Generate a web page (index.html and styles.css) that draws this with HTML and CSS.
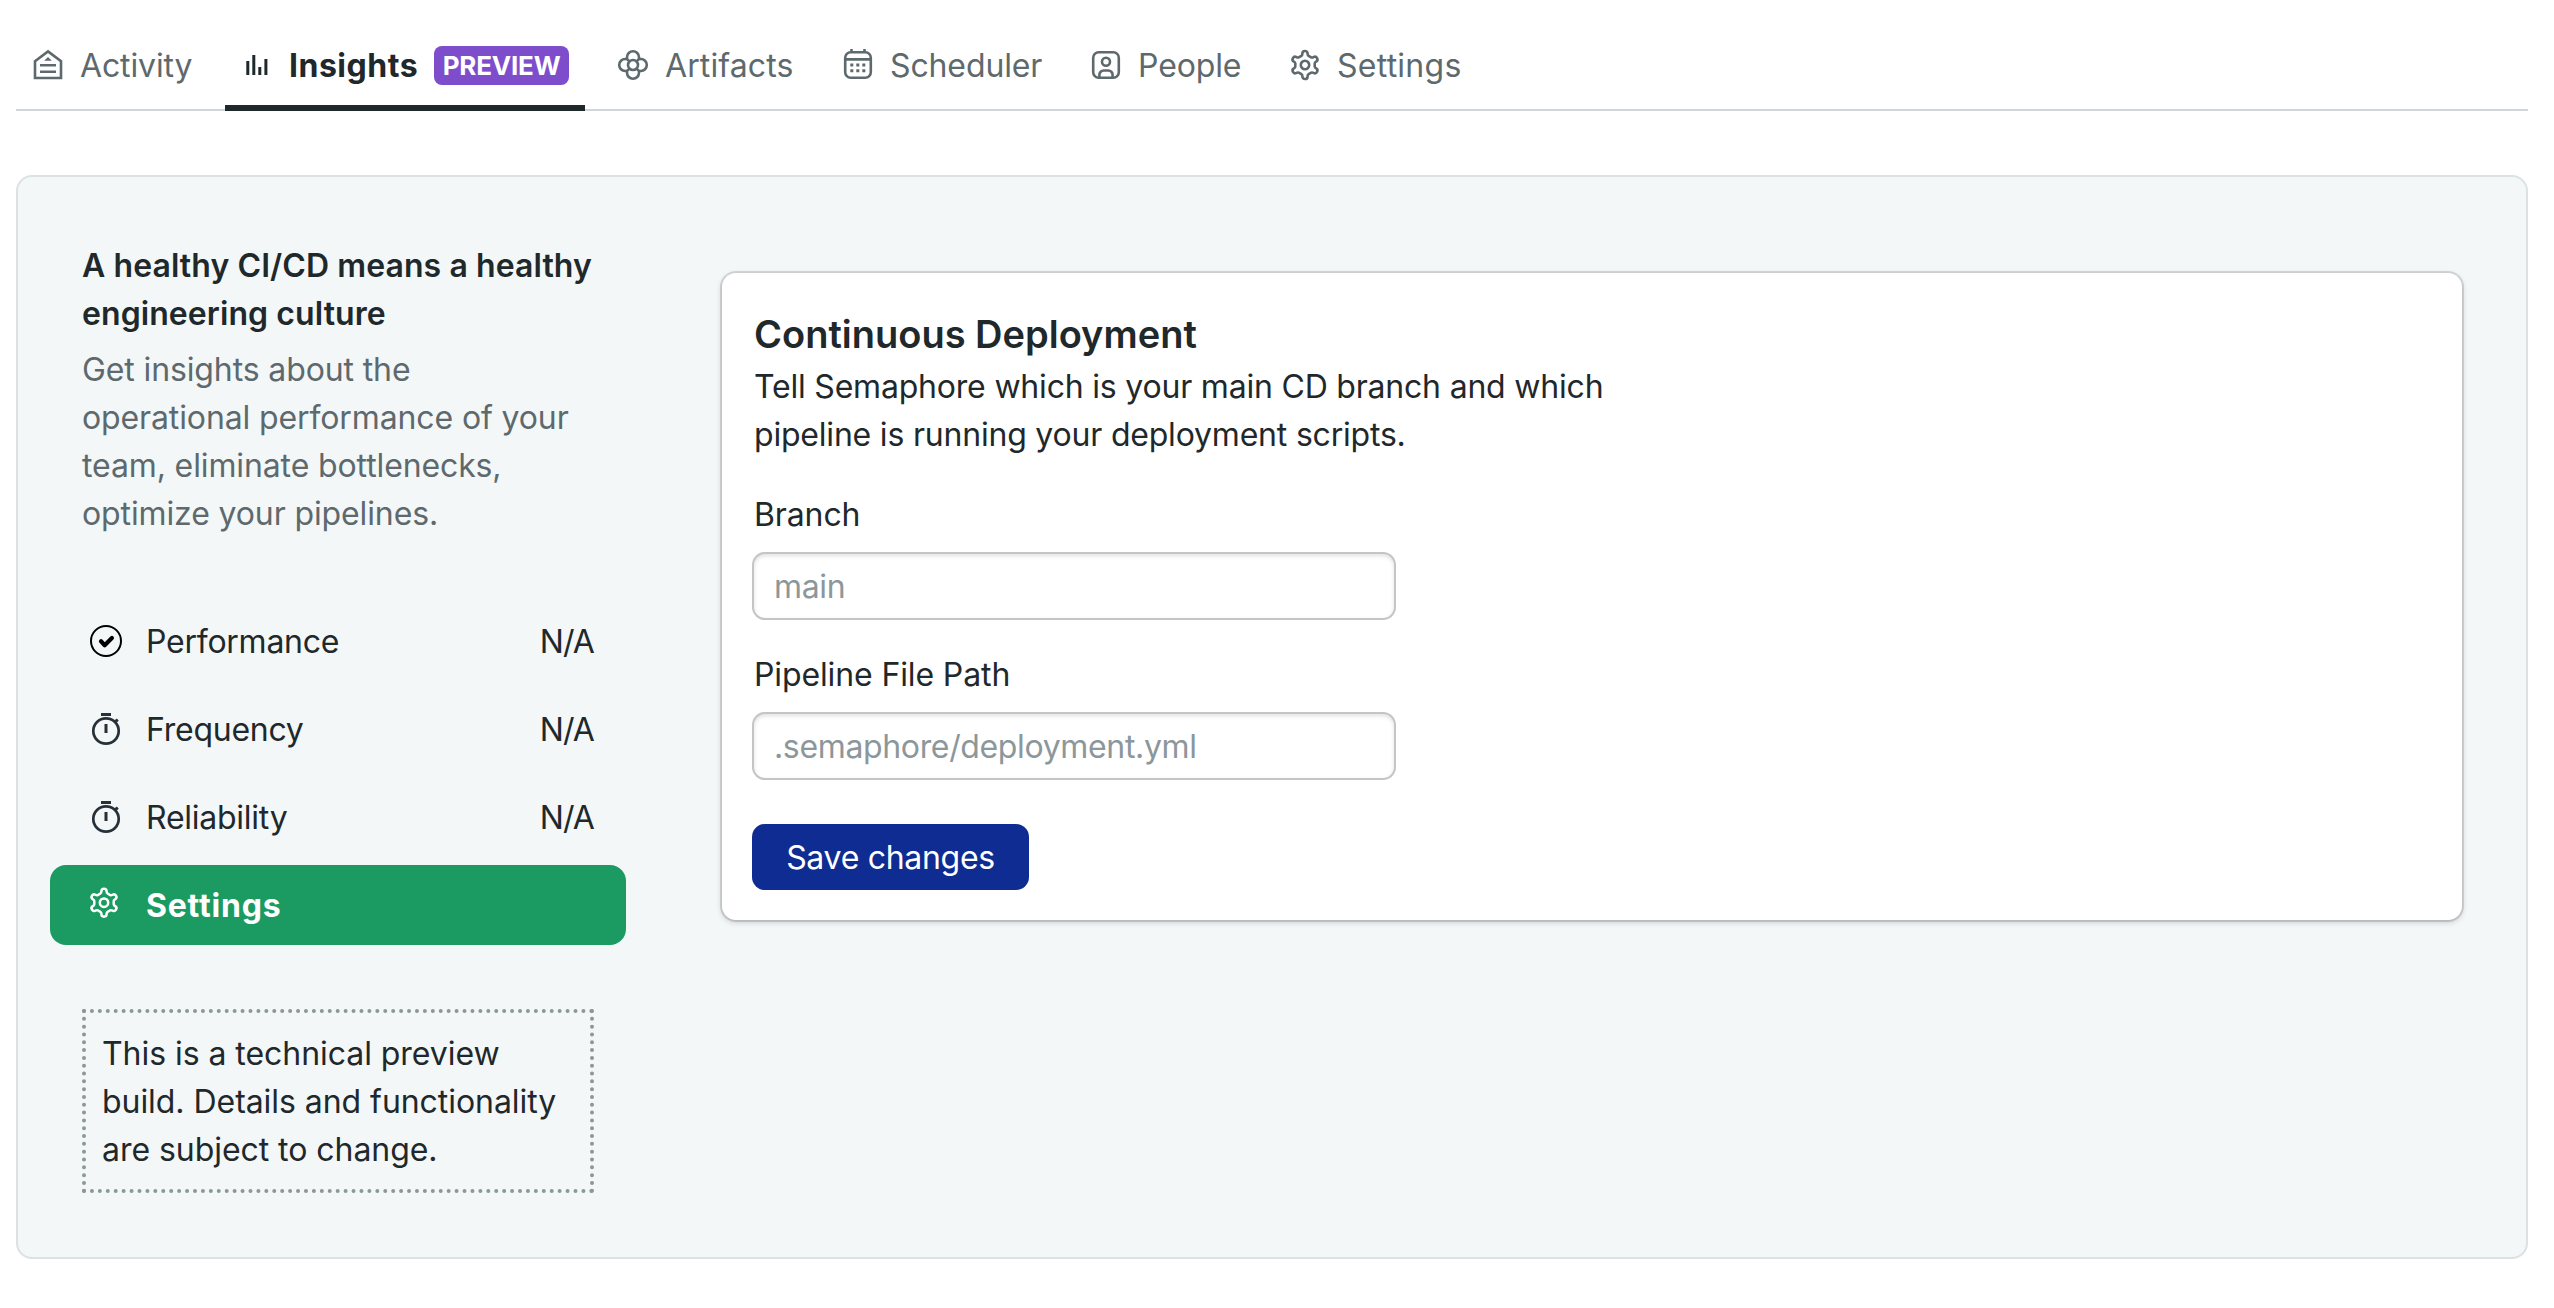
FILE: index.html
```
<!DOCTYPE html>
<html lang="en">
<head>
<meta charset="utf-8">
<title>Insights</title>
<link rel="stylesheet" href="styles.css">
</head>
<body>
<svg class="sprite" aria-hidden="true">
  <symbol id="gear" viewBox="-16 -16 32 32">
    <path d="M-2.6-11.4A2.6 2.6 0 0 1 2.6-11.4C2.6-10.2 2.9-9.6 3.6-9.2L6.2-7.6C6.9-7.3 7.6-7.4 8.57-7.95A2.6 2.6 0 0 1 11.17-3.45C10.1-2.9 9.7-2.4 9.7-1.6V1.6C9.7 2.4 10.1 2.9 11.17 3.45A2.6 2.6 0 0 1 8.57 7.95C7.6 7.4 6.9 7.3 6.2 7.6L3.6 9.2C2.9 9.6 2.6 10.2 2.6 11.4A2.6 2.6 0 0 1-2.6 11.4C-2.6 10.2-2.9 9.6-3.6 9.2L-6.2 7.6C-6.9 7.3-7.6 7.4-8.57 7.95A2.6 2.6 0 0 1-11.17 3.45C-10.1 2.9-9.7 2.4-9.7 1.6V-1.6C-9.7-2.4-10.1-2.9-11.17-3.45A2.6 2.6 0 0 1-8.57-7.95C-7.6-7.4-6.9-7.3-6.2-7.6L-3.6-9.2C-2.9-9.6-2.6-10.2-2.6-11.4Z"/>
    <circle r="4.2"/>
  </symbol>
  <symbol id="stopwatch" viewBox="0 0 48 48">
    <circle cx="24" cy="26" r="12.7"/>
    <path d="M19 9.5h10M24 19v9M32.5 17.2l3.3-2.6" stroke-width="3"/>
  </symbol>
</svg>

<nav class="tabs">
  <a class="tab tab-activity">
    <svg class="icon" viewBox="0 0 32 32"><path d="M3 13.2 16 3.4l13 9.8V30H3ZM8 17.2h16M8 23.7h16"/><path d="M12.2 12.8 16 9l3.8 3.8Z" fill="currentColor" stroke="none"/></svg>
    <span>Activity</span>
  </a>
  <a class="tab tab-insights active">
    <svg class="icon" viewBox="0 0 32 32"><path d="M6.8 13v14M12.8 7v20M18.8 19v8M24.9 11v16" stroke-width="3"/></svg>
    <span>Insights</span>
    <span class="badge">PREVIEW</span>
  </a>
  <a class="tab tab-artifacts">
    <svg class="icon" viewBox="0 0 32 32"><g transform="translate(16 17)"><path d="M-5.6-5.6C-6-6.2-6-7-6-7.8A6 6 0 0 1 6-7.8C6-7 6-6.2 5.6-5.6 6.2-6 7-6 7.8-6A6 6 0 0 1 7.8 6C7 6 6.2 6 5.6 5.6 6 6.2 6 7 6 7.8A6 6 0 0 1-6 7.8C-6 7-6 6.2-5.6 5.6-6.2 6-7 6-7.8 6A6 6 0 0 1-7.8-6C-7-6-6.2-6-5.6-5.6ZL-3.6-3.6M5.6-5.6 3.6-3.6M5.6 5.6 3.6 3.6M-5.6 5.6-3.6 3.6"/><circle r="5"/></g></svg>
    <span>Artifacts</span>
  </a>
  <a class="tab tab-scheduler">
    <svg class="icon" viewBox="0 0 32 32"><rect x="3.2" y="4.2" width="25.6" height="25.6" rx="5.5"/><path d="M3 11.4h26M9.5 1v3M22.5 1v3"/><path d="M8.3 17h15M8.3 22.8h15" stroke-width="3" stroke-dasharray="3 3"/></svg>
    <span>Scheduler</span>
  </a>
  <a class="tab tab-people">
    <svg class="icon" viewBox="0 0 32 32"><rect x="3.2" y="4.2" width="25.6" height="25.6" rx="5.5"/><circle cx="16" cy="13.7" r="4"/><path d="M9.4 30v-3.2a4.3 4.3 0 0 1 4.3-4.3h4.6a4.3 4.3 0 0 1 4.3 4.3V30"/></svg>
    <span>People</span>
  </a>
  <a class="tab tab-settings">
    <svg class="icon icon-gear"><use href="#gear"/></svg>
    <span>Settings</span>
  </a>
</nav>

<main class="panel">
  <aside class="sidebar">
    <div class="intro">
      <h2>A healthy CI/CD means a healthy engineering culture</h2>
      <p>Get insights about the<br>operational performance of your team, eliminate bottlenecks, optimize your pipelines.</p>
    </div>
    <div class="menu">
      <a class="row">
        <svg class="row-icon row-check" viewBox="0 0 48 48"><circle cx="24" cy="24" r="15"/><path d="m19 24.2 3.7 4 7.2-7.2" stroke-width="4.2" stroke-linecap="round" stroke-linejoin="round"/></svg>
        <span>Performance</span><span class="value">N/A</span>
      </a>
      <a class="row">
        <svg class="row-icon"><use href="#stopwatch"/></svg>
        <span>Frequency</span><span class="value">N/A</span>
      </a>
      <a class="row">
        <svg class="row-icon"><use href="#stopwatch"/></svg>
        <span>Reliability</span><span class="value">N/A</span>
      </a>
      <a class="row selected">
        <svg class="row-icon row-gear" viewBox="0 0 48 48"><use href="#gear" x="6" y="5.7" width="32" height="32"/></svg>
        <span>Settings</span>
      </a>
    </div>
    <p class="note">This is a technical preview build. Details and functionality are subject to change.</p>
  </aside>

  <form class="card">
    <h1>Continuous Deployment</h1>
    <p class="lead">Tell Semaphore which is your main CD branch and which pipeline is running your deployment scripts.</p>
    <label for="branch">Branch</label>
    <input id="branch" type="text" placeholder="main">
    <label for="path">Pipeline File Path</label>
    <input id="path" type="text" placeholder=".semaphore/deployment.yml">
    <button type="button">Save changes</button>
  </form>
</main>
</body>
</html>
```

FILE: styles.css
```
* { box-sizing: border-box; }

body {
  margin: 0;
  padding: 20px 26px 0 16px;
  background: #fff;
  color: #1f282b;
  font: 440 32px/48px Inter, "Noto Sans", sans-serif;
  letter-spacing: -0.12px;
}

h1, h2, p { margin: 0; }

.sprite { display: none; }

svg {
  flex: none;
  fill: none;
  stroke: currentColor;
  overflow: visible;
}

/* Top navigation */
.tabs {
  display: flex;
  gap: 16px;
  height: 91px;
  box-shadow: inset 0 -2px #cfd5d8;
}

.tab {
  display: flex;
  gap: 16px;
  padding: 22px 16px 0;
  color: #5e696d;
  white-space: nowrap;
}

.tab-activity { width: 193px; }
.tab-insights { width: 360px; }
.tab-artifacts { width: 209px; letter-spacing: 0.1px; }
.tab-scheduler { width: 232px; }
.tab-people { width: 183px; }
.tab-settings { letter-spacing: 0.25px; }

.tab.active {
  color: #1f282b;
  font-weight: 700;
  letter-spacing: 0.5px;
  border-bottom: 6px solid #1f282b;
}

.icon {
  width: 32px;
  height: 32px;
  margin-top: 6px;
  stroke-width: 2.6;
}

.icon-gear { margin-top: 7px; }

.badge {
  width: 135px;
  height: 39px;
  margin: 4px 0 0 auto;
  border-radius: 8px;
  background: #7d4dcb;
  color: #fff;
  font-size: 26px;
  line-height: 40px;
  letter-spacing: -0.2px;
  text-align: center;
}

/* Content panel */
.panel {
  display: flex;
  align-items: flex-start;
  margin-top: 64px;
  padding: 64px 64px 64px 32px;
  border: 2px solid #dce1e1;
  border-radius: 16px;
  background: #f3f7f8;
}

.sidebar { width: 576px; }

.intro { padding: 1px 32px 0; }

.intro h2 {
  margin-bottom: 8px;
  font-size: 32px;
  font-weight: 630;
  letter-spacing: 0.08px;
}

.intro p { color: #5e696d; }

.menu {
  display: grid;
  gap: 8px;
  margin: 63px 0 64px;
}

.row {
  display: flex;
  align-items: center;
  gap: 16px;
  height: 80px;
  padding: 0 32px;
  border-radius: 16px;
  letter-spacing: -0.25px;
}

.row span { padding-top: 2px; }

.row-icon {
  width: 48px;
  height: 48px;
  color: #263038;
  stroke-width: 2.7;
}

.row-check { color: #000; stroke-width: 2; }
.row-gear { color: #fff; stroke-width: 2.5; }

.row .value { margin-left: auto; letter-spacing: -0.9px; }

.row.selected {
  background: #1b9b62;
  color: #fff;
  font-weight: 700;
  letter-spacing: 0.8px;
}

.note {
  margin: 0 32px;
  padding: 17px 14px 15px 16px;
  border: 4px dotted #8c979b;
  letter-spacing: -0.05px;
}

/* Deployment form */
.card {
  flex: 1;
  margin: 32px 0 0 96px;
  padding: 32px;
  border-radius: 14px;
  background: #fff;
  box-shadow: 0 0 0 2px rgba(0, 0, 0, 0.12), 0 2px 6px rgba(0, 0, 0, 0.2);
}

.card h1 {
  font-size: 38px;
  line-height: 58px;
  font-weight: 630;
  letter-spacing: 0;
}

.lead { max-width: 880px; letter-spacing: -0.2px; }

.card label {
  display: block;
  margin: 32px 0 15px;
}

.card input + label { margin-top: 33px; }

.card input {
  display: block;
  width: 640px;
  height: 64px;
  padding: 0 20px;
  border: 0;
  border-radius: 11px;
  background: #fff;
  box-shadow: 0 0 0 2px #c4c5c6, inset 0 2px 4px rgba(0, 0, 0, 0.12);
  color: inherit;
  font: inherit;
  letter-spacing: -0.35px;
}

.card input::placeholder { color: #8c979b; opacity: 1; }

.card button {
  display: block;
  width: 273px;
  height: 62px;
  margin-top: 48px;
  padding: 2px 0 0;
  border: 0;
  border-radius: 11px;
  background: #0e2c91;
  box-shadow: 0 0 0 2px #0e2c91;
  color: #fff;
  font: inherit;
  letter-spacing: -0.3px;
}
```
